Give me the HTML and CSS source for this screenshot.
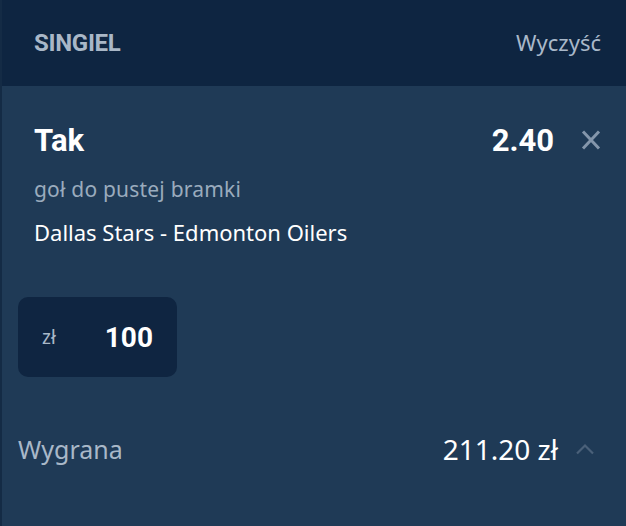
FILE: index.html
```html
<!DOCTYPE html>
<html lang="pl">
<head>
    <meta charset="UTF-8">
    <meta name="viewport" content="width=device-width, initial-scale=1.0">
    <title>Kupon - Singiel</title>
    <link rel="stylesheet" href="styles.css">
</head>
<body>
    <div class="slip">
        <div class="slip-header">
            <span class="slip-type">SINGIEL</span>
            <span class="slip-clear">Wyczyść</span>
        </div>

        <div class="slip-body">
            <div class="bet">
                <div class="bet-top">
                    <span class="bet-pick">Tak</span>
                    <div class="bet-odds-wrap">
                        <span class="bet-odds">2.40</span>
                        <svg class="bet-remove" width="22" height="20" viewBox="0 0 22 20">
                            <path d="M3 1.5 L19 18.5 M19 1.5 L3 18.5" stroke="#8496ab" stroke-width="3" stroke-linecap="butt" fill="none"/>
                        </svg>
                    </div>
                </div>
                <div class="bet-market">goł do pustej bramki</div>
                <div class="bet-event">Dallas Stars - Edmonton Oilers</div>
            </div>

            <div class="stake">
                <span class="stake-currency">zł</span>
                <span class="stake-value">100</span>
            </div>

            <div class="win-row">
                <span class="win-label">Wygrana</span>
                <div class="win-right">
                    <span class="win-value">211.20 zł</span>
                    <svg class="win-toggle" width="20" height="12" viewBox="0 0 20 12">
                        <path d="M2 10.5 L10 2.5 L18 10.5" stroke="#4a6079" stroke-width="2.2" fill="none"/>
                    </svg>
                </div>
            </div>
        </div>
    </div>
</body>
</html>
```

FILE: styles.css
```css
body {
    margin: 0;
    background: #1f3a56;
    font-family: "Noto Sans", "Open Sans", sans-serif;
}
.slip {
    width: 626px;
    height: 526px;
    background: #1f3a56;
    border-left: 2px solid #142b45;
    box-sizing: border-box;
}
.slip-header {
    height: 86px;
    background: #0e2541;
    display: flex;
    align-items: center;
    justify-content: space-between;
    padding: 0 25px 0 32px;
}
.slip-type {
    font-family: Roboto, sans-serif;
    font-weight: 700;
    font-size: 24px;
    color: #a9b7c7;
    letter-spacing: -0.3px;
}
.slip-clear {
    font-size: 22px;
    color: #a9b8c9;
    margin-top: -2px;
}
.slip-body {
    padding-top: 34px;
}
.bet {
    padding: 0 24px 0 32px;
}
.bet-top {
    display: flex;
    align-items: center;
    justify-content: space-between;
    height: 40px;
}
.bet-pick,
.bet-odds {
    font-family: Roboto, sans-serif;
    font-weight: 700;
    font-size: 31px;
    color: #ffffff;
}
.bet-odds-wrap {
    display: flex;
    align-items: center;
    gap: 26px;
}
.bet-market {
    margin-top: 15px;
    font-size: 21px;
    line-height: 28px;
    letter-spacing: 0.2px;
    color: #9aabbd;
}
.bet-event {
    margin-top: 15px;
    font-size: 22px;
    line-height: 28px;
    color: #ffffff;
}
.stake {
    margin: 51px 0 0 16px;
    width: 159px;
    height: 80px;
    box-sizing: border-box;
    background: #0f2541;
    border-radius: 10px;
    display: flex;
    align-items: center;
    justify-content: space-between;
    padding: 0 24px;
}
.stake-currency {
    font-size: 19px;
    color: #a9b8c8;
}
.stake-value {
    font-family: Roboto, sans-serif;
    font-weight: 700;
    font-size: 28px;
    color: #ffffff;
}
.win-row {
    margin-top: 52px;
    height: 40px;
    display: flex;
    align-items: center;
    justify-content: space-between;
    padding: 0 31px 0 16px;
}
.win-label {
    font-size: 25px;
    color: #a9b8c8;
}
.win-right {
    display: flex;
    align-items: center;
    gap: 17px;
}
.win-value {
    font-size: 28px;
    color: #ffffff;
}
```
